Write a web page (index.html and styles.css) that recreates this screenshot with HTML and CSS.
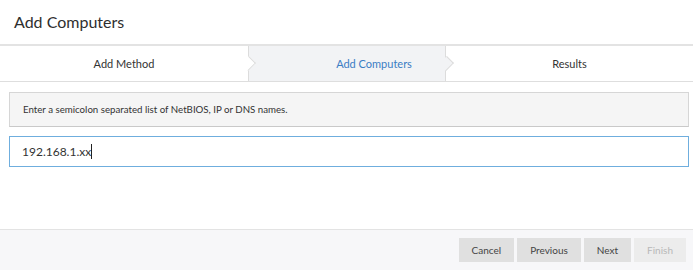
FILE: index.html
```html
<!DOCTYPE html>
<html lang="en">
<head>
    <meta charset="UTF-8">
    <title>Add Computers</title>
    <link rel="stylesheet" href="styles.css">
</head>
<body>
    <div class="dialog">
        <div class="dialog-header">Add Computers</div>

        <div class="steps">
            <div class="step step-done">Add Method</div>
            <div class="step step-active">Add Computers</div>
            <div class="step">Results</div>
        </div>

        <div class="dialog-body">
            <div class="hint">Enter a semicolon separated list of NetBIOS, IP or DNS names.</div>
            <div class="names-input">192.168.1.xx<span class="caret"></span></div>
        </div>

        <div class="dialog-footer">
            <button class="btn">Cancel</button>
            <button class="btn">Previous</button>
            <button class="btn">Next</button>
            <button class="btn btn-disabled">Finish</button>
        </div>
    </div>
</body>
</html>
```

FILE: styles.css
```css
body {
    margin: 0;
    font-family: Lato, "Open Sans", sans-serif;
    color: #333;
    background: #fff;
}

.dialog {
    width: 693px;
    height: 270px;
    display: flex;
    flex-direction: column;
}

.dialog-header {
    height: 44px;
    padding-left: 14px;
    font-size: 16px;
    line-height: 44px;
    color: #2e2e2e;
    border-bottom: 2px solid #e3e3e3;
}

.steps {
    display: flex;
    height: 35px;
    border-bottom: 1px solid #dedede;
    font-size: 11px;
    line-height: 35px;
}

.step {
    position: relative;
    text-align: center;
    color: #333;
}

.step:nth-child(1) { width: 248px; }
.step:nth-child(2) { width: 198px; padding-left: 54px; box-sizing: border-box; }
.step:nth-child(3) { flex: 1; }

.step-active {
    background: #f2f3f5;
    color: #3b7dc4;
    border-left: 1px solid #dcdcdc;
    border-right: 1px solid #dcdcdc;
}

/* chevron sticking into the next step */
.step-done::after,
.step-active::after {
    content: "";
    position: absolute;
    top: 12px;
    right: -5px;
    width: 10px;
    height: 10px;
    background: #fff;
    border-top: 1px solid #dcdcdc;
    border-right: 1px solid #dcdcdc;
    transform: rotate(45deg) scaleX(0.9);
    z-index: 1;
}

.step-done::after { right: -6px; }
.step-active::after { background: #f2f3f5; right: -7px; }

.dialog-body {
    flex: 1;
    padding: 10px 4px 0 9px;
}

.hint {
    height: 33px;
    line-height: 33px;
    padding-left: 13px;
    font-size: 9.7px;
    color: #333;
    background: #f5f5f5;
    border: 1px solid #d6d6d6;
    border-bottom-color: #c9c9c9;
}

.names-input {
    margin-top: 9px;
    height: 29px;
    line-height: 29px;
    padding-left: 12px;
    font-size: 12px;
    color: #333;
    border: 1px solid #6faede;
}

.caret {
    display: inline-block;
    width: 1px;
    height: 15px;
    background: #222;
    vertical-align: -3px;
}

.dialog-footer {
    height: 40px;
    background: #f7f7f9;
    border-top: 1px solid #e3e3e3;
    display: flex;
    justify-content: flex-end;
    align-items: center;
    gap: 3px;
    padding-right: 7px;
}

.btn {
    min-width: 47px;
    height: 24px;
    padding: 0 13px;
    border: none;
    border-radius: 0;
    background: #e0e0e0;
    color: #444;
    font-family: Lato, "Open Sans", sans-serif;
    font-size: 10px;
}

.btn-disabled {
    background: #ececec;
    color: #b8b8b8;
}
```
